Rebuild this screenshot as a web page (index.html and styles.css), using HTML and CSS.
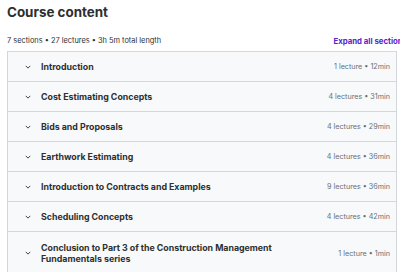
FILE: index.html
```html
<!DOCTYPE html>
<html lang="en">
<head>
    <meta charset="UTF-8">
    <title>Course content</title>
    <link rel="stylesheet" href="styles.css">
</head>
<body>
    <div class="curriculum">
        <h2>Course content</h2>
        <div class="summary">
            <span>7 sections • 27 lectures • 3h 5m total length</span>
            <button class="expand">Expand all sections</button>
        </div>

        <div class="sections">
            <div class="section">
                <svg class="chev" viewBox="0 0 8 5"><path d="M1 1l3 3 3-3"/></svg>
                <span class="title">Introduction</span>
                <span class="meta">1 lecture • 12min</span>
            </div>
            <div class="section">
                <svg class="chev" viewBox="0 0 8 5"><path d="M1 1l3 3 3-3"/></svg>
                <span class="title">Cost Estimating Concepts</span>
                <span class="meta">4 lectures • 31min</span>
            </div>
            <div class="section">
                <svg class="chev" viewBox="0 0 8 5"><path d="M1 1l3 3 3-3"/></svg>
                <span class="title">Bids and Proposals</span>
                <span class="meta">4 lectures • 29min</span>
            </div>
            <div class="section">
                <svg class="chev" viewBox="0 0 8 5"><path d="M1 1l3 3 3-3"/></svg>
                <span class="title">Earthwork Estimating</span>
                <span class="meta">4 lectures • 36min</span>
            </div>
            <div class="section">
                <svg class="chev" viewBox="0 0 8 5"><path d="M1 1l3 3 3-3"/></svg>
                <span class="title">Introduction to Contracts and Examples</span>
                <span class="meta">9 lectures • 36min</span>
            </div>
            <div class="section">
                <svg class="chev" viewBox="0 0 8 5"><path d="M1 1l3 3 3-3"/></svg>
                <span class="title">Scheduling Concepts</span>
                <span class="meta">4 lectures • 42min</span>
            </div>
            <div class="section tall">
                <svg class="chev" viewBox="0 0 8 5"><path d="M1 1l3 3 3-3"/></svg>
                <span class="title">Conclusion to Part 3 of the Construction Management Fundamentals series</span>
                <span class="meta">1 lecture • 1min</span>
            </div>
        </div>
    </div>
</body>
</html>
```

FILE: styles.css
```css
body {
    margin: 0;
    padding: 0 3px 0 7px;
    font-family: Inter, "Noto Sans", sans-serif;
    color: #2d2f31;
    background: #fff;
    overflow: hidden;
}
h2 {
    margin: 0;
    padding-top: 3px;
    font-size: 13.4px;
    line-height: 18px;
    font-weight: 700;
}
.summary {
    display: flex;
    justify-content: space-between;
    align-items: center;
    margin: 12px -10px 0 0;
    height: 15px;
    font-size: 7.4px;
}
.expand {
    background: none;
    border: none;
    padding: 0;
    font-family: inherit;
    font-size: 7.8px;
    font-weight: 700;
    color: #5624d0;
    cursor: pointer;
}
.sections {
    margin-top: 3px;
    border: 1px solid #d1d7dc;
    border-bottom: none;
}
.section {
    display: flex;
    align-items: center;
    height: 29px;
    padding: 0 6px 0 17px;
    background: #f7f9fa;
    border-bottom: 1px solid #d1d7dc;
}
.section.tall {
    height: 39px;
    padding-top: 2px;
    box-sizing: border-box;
    height: 41px;
}
.chev {
    width: 6px;
    height: 4px;
    margin-right: 10px;
    fill: none;
    stroke: #2d2f31;
    stroke-width: 1.2;
}
.title {
    flex: 1;
    max-width: 245px;
    font-size: 8.8px;
    line-height: 11px;
    font-weight: 700;
}
.meta {
    margin-left: auto;
    font-size: 7.2px;
    color: #6a6f73;
}
```
